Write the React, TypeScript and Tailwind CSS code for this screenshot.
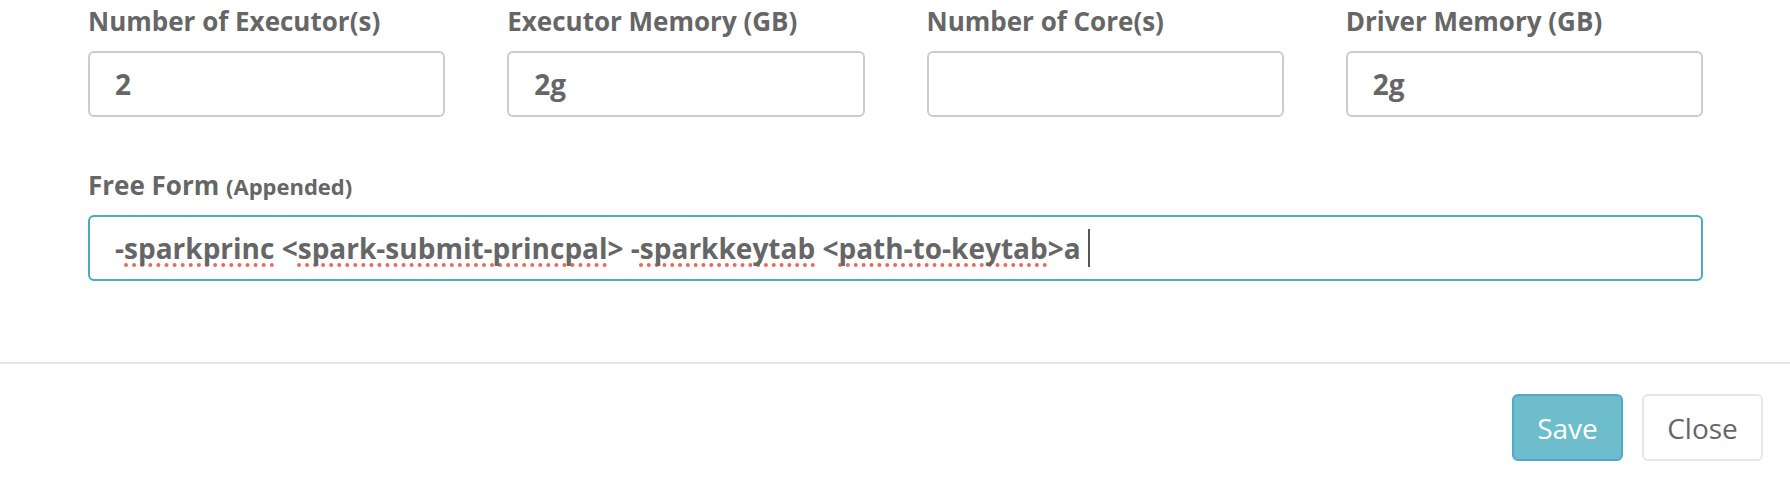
import React from "react";

const labelCls = "block text-[26px] leading-[35px] font-bold text-[#666666]";
const inputCls =
  "h-[66px] mt-[12px] border-2 border-[#cccccc] rounded-[6px] pl-[25px] flex items-center text-[28px] font-bold text-[#666666]";

const Spell = ({ children }: { children: React.ReactNode }) => (
  <span className="underline decoration-dotted decoration-[#ea6a5c] decoration-[4px] underline-offset-[4px] [text-decoration-skip-ink:none]">
    {children}
  </span>
);

export default function App() {
  const fields = [
    { label: "Number of Executor(s)", value: "2" },
    { label: "Executor Memory (GB)", value: "2g" },
    { label: "Number of Core(s)", value: "" },
    { label: "Driver Memory (GB)", value: "2g" },
  ];
  return (
    <div className="w-[1790px] h-[488px] bg-white font-['Open_Sans',sans-serif] overflow-hidden">
      <div className="pl-[88px] pr-[87px] pt-[4px]">
        <div className="grid grid-cols-4 gap-x-[62px]">
          {fields.map((f) => (
            <div key={f.label}>
              <label className={labelCls}>{f.label}</label>
              <div className={inputCls}>{f.value}</div>
            </div>
          ))}
        </div>
        <div className="mt-[51px]">
          <label className={labelCls}>
            Free Form <span className="text-[22px] leading-none">(Appended)</span>
          </label>
          <div className="h-[66px] mt-[12px] border-2 border-[#4aa8c0] rounded-[6px] pl-[25px] flex items-center text-[28px] font-bold text-[#666666] whitespace-pre">
            <span>
              -<Spell>sparkprinc</Spell>{" <"}
              <Spell>spark-submit-princpal</Spell>{"> -"}
              <Spell>sparkkeytab</Spell>{" <"}
              <Spell>path-to-keytab</Spell>{">a "}
            </span>
            <span className="inline-block w-[2px] h-[38px] bg-[#555555]" />
          </div>
        </div>
      </div>
      <div className="mt-[81px] border-t-2 border-[#e5e5e5]" />
      <div className="flex justify-end gap-[19px] pr-[27px] pt-[30px]">
        <button className="h-[67px] w-[111px] rounded-[6px] border-2 border-[#4eabc1] bg-[#6dbdcc] text-white text-[28px] flex items-center justify-center">
          Save
        </button>
        <button className="h-[67px] w-[121px] rounded-[6px] border-2 border-[#e6e6e6] bg-white text-[#666666] text-[28px] flex items-center justify-center">
          Close
        </button>
      </div>
    </div>
  );
}
